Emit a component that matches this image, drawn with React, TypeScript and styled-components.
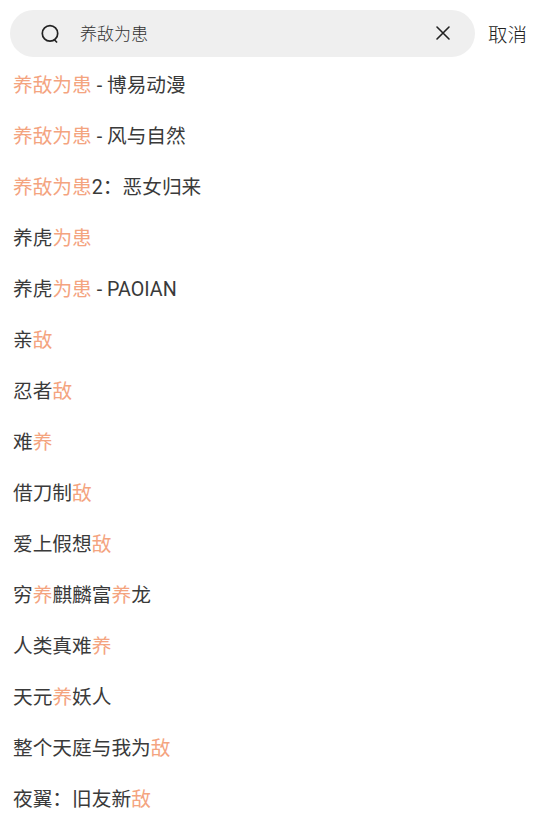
import React, { ReactElement } from "react";
import styled, { createGlobalStyle } from "styled-components";

// [] marks the part of a title that matched the query
const results = [
  "[养敌为患] - 博易动漫",
  "[养敌为患] - 风与自然",
  "[养敌为患]2：恶女归来",
  "养虎[为患]",
  "养虎[为患] - PAOIAN",
  "亲[敌]",
  "忍者[敌]",
  "难[养]",
  "借刀制[敌]",
  "爱上假想[敌]",
  "穷[养]麒麟富[养]龙",
  "人类真难[养]",
  "天元[养]妖人",
  "整个天庭与我为[敌]",
  "夜翼：旧友新[敌]",
];

function highlight(title: string): ReactElement[] {
  return title
    .split(/(\[[^\]]+\])/)
    .filter(Boolean)
    .map((part, i) =>
      part.startsWith("[") ? (
        <Hit key={i}>{part.slice(1, -1)}</Hit>
      ) : (
        <span key={i}>{part}</span>
      )
    );
}

function App(): ReactElement {
  return (
    <Page>
      <GlobalStyle />
      <Header>
        <SearchBar>
          <SearchIcon width="20" height="20" viewBox="0 0 20 20" fill="none">
            <circle cx="10" cy="9.4" r="7.7" stroke="#222" strokeWidth="1.7" />
            <path d="M14.6 16 L16.6 18" stroke="#222" strokeWidth="1.7" strokeLinecap="round" />
          </SearchIcon>
          <Query>养敌为患</Query>
          <ClearIcon width="16" height="16" viewBox="0 0 16 16" fill="none">
            <path d="M2 2 L14 14 M14 2 L2 14" stroke="#222" strokeWidth="1.6" strokeLinecap="round" />
          </ClearIcon>
        </SearchBar>
        <Cancel>取消</Cancel>
      </Header>
      <List>
        {results.map((title) => (
          <Row key={title}>{highlight(title)}</Row>
        ))}
      </List>
    </Page>
  );
}

export default App;

const GlobalStyle = createGlobalStyle`
  html, body {
    margin: 0;
    padding: 0;
    background: #fff;
    overflow: hidden;
  }
  body {
    font-family: "Roboto", "Noto Sans CJK SC", sans-serif;
  }
`;

const Page = styled.div`
  width: 540px;
  height: 816px;
  overflow: hidden;
`;

const Header = styled.div`
  display: flex;
  align-items: center;
  height: 47px;
  padding: 10px 13px 3px 10px;
`;

const SearchBar = styled.div`
  flex: 1;
  display: flex;
  align-items: center;
  height: 47px;
  padding: 0 24px 0 30px;
  border-radius: 24px;
  background: #efefef;
`;

const SearchIcon = styled.svg`
  flex: none;
`;

const Query = styled.div`
  flex: 1;
  margin-left: 20px;
  margin-top: -2px;
  font-size: 17px;
  font-weight: 300;
  color: #333;
`;

const ClearIcon = styled.svg`
  flex: none;
  margin-top: -1px;
`;

const Cancel = styled.div`
  margin-left: 13px;
  margin-top: -1px;
  font-size: 19.5px;
  font-weight: 300;
  color: #222;
`;

const List = styled.div`
  display: flex;
  flex-direction: column;
  padding: 0 13px;
`;

const Row = styled.div`
  height: 51px;
  line-height: 51px;
  font-size: 19.7px;
  color: #3a3a3a;
  white-space: nowrap;
`;

const Hit = styled.span`
  color: #f4a47f;
`;
